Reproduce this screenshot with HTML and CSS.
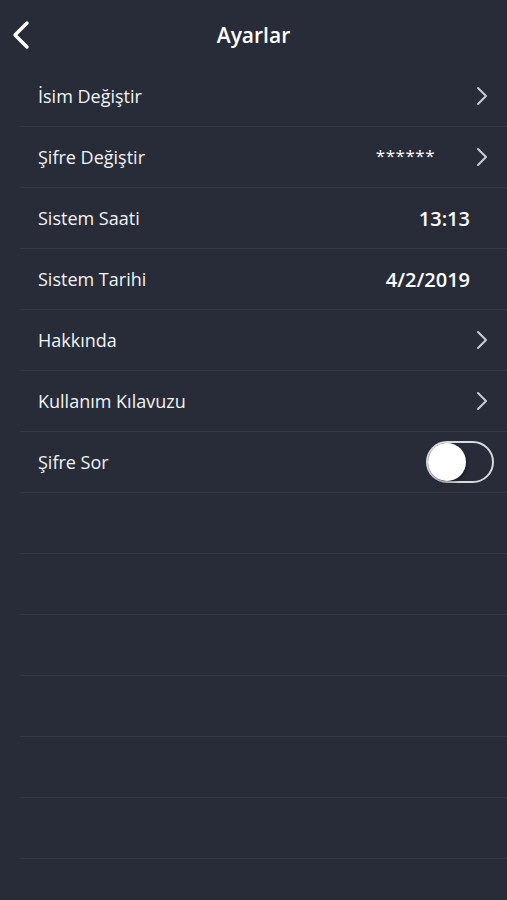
FILE: index.html
```html
<!DOCTYPE html>
<html lang="tr">
<head>
    <meta charset="UTF-8">
    <meta name="viewport" content="width=device-width, initial-scale=1.0">
    <title>Ayarlar</title>
    <link rel="stylesheet" href="styles.css">
</head>
<body>
    <div class="screen">
        <div class="header">
            <svg class="back" width="20" height="30" viewBox="0 0 20 30">
                <path d="M16 3 L4 15 L16 27" fill="none" stroke="#fff" stroke-width="3.4" stroke-linecap="round" stroke-linejoin="round"/>
            </svg>
            <h1>Ayarlar</h1>
        </div>

        <ul class="list">
            <li class="row">
                <span class="label">İsim Değiştir</span>
                <svg class="chev" width="12" height="20" viewBox="0 0 12 20"><path d="M2 2 L10 10 L2 18" fill="none" stroke="#c9ccd3" stroke-width="2" stroke-linecap="round" stroke-linejoin="round"/></svg>
            </li>
            <li class="row">
                <span class="label">Şifre Değiştir</span>
                <span class="stars">******</span>
                <svg class="chev" width="12" height="20" viewBox="0 0 12 20"><path d="M2 2 L10 10 L2 18" fill="none" stroke="#c9ccd3" stroke-width="2" stroke-linecap="round" stroke-linejoin="round"/></svg>
            </li>
            <li class="row">
                <span class="label">Sistem Saati</span>
                <span class="value">13:13</span>
            </li>
            <li class="row">
                <span class="label">Sistem Tarihi</span>
                <span class="value">4/2/2019</span>
            </li>
            <li class="row">
                <span class="label">Hakkında</span>
                <svg class="chev" width="12" height="20" viewBox="0 0 12 20"><path d="M2 2 L10 10 L2 18" fill="none" stroke="#c9ccd3" stroke-width="2" stroke-linecap="round" stroke-linejoin="round"/></svg>
            </li>
            <li class="row">
                <span class="label">Kullanım Kılavuzu</span>
                <svg class="chev" width="12" height="20" viewBox="0 0 12 20"><path d="M2 2 L10 10 L2 18" fill="none" stroke="#c9ccd3" stroke-width="2" stroke-linecap="round" stroke-linejoin="round"/></svg>
            </li>
            <li class="row">
                <span class="label">Şifre Sor</span>
                <span class="toggle"><span class="knob"></span></span>
            </li>
            <li class="row empty"></li>
            <li class="row empty"></li>
            <li class="row empty"></li>
            <li class="row empty"></li>
            <li class="row empty"></li>
            <li class="row empty"></li>
        </ul>
    </div>
</body>
</html>
```

FILE: styles.css
```css
/* General */
body {
    margin: 0;
    background-color: #282c38;
    color: #fff;
    font-family: "Open Sans", "Liberation Sans", sans-serif;
}

.screen {
    width: 507px;
    height: 900px;
    overflow: hidden;
}

/* Header */
.header {
    height: 66px;
    display: flex;
    align-items: center;
    justify-content: center;
    position: relative;
}

.header h1 {
    margin: 0;
    font-size: 21px;
    font-weight: 600;
    margin-top: 4px;
}

.back {
    position: absolute;
    left: 11px;
    top: 20px;
}

/* List */
.list {
    list-style: none;
    margin: 0;
    padding: 0 0 0 20px;
}

.row {
    height: 60px;
    border-bottom: 1px solid #343846;
    display: flex;
    align-items: center;
    padding: 0 19px 0 18px;
}

.label {
    flex: 1;
    font-size: 18px;
    color: #f2f3f5;
}

.stars {
    font-size: 17px;
    margin-right: 41px;
    margin-top: -4px;
    letter-spacing: 0.5px;
}

.value {
    font-size: 20px;
    font-weight: 600;
    margin-right: 18px;
}

/* Toggle */
.toggle {
    width: 64px;
    height: 38px;
    border: 2px solid #d8dade;
    border-radius: 21px;
    margin-right: -6px;
    display: flex;
    align-items: center;
}

.knob {
    width: 38px;
    height: 38px;
    border-radius: 50%;
    background: #fff;
    box-shadow: 1px 2px 3px rgba(0, 0, 0, 0.35);
}
```
